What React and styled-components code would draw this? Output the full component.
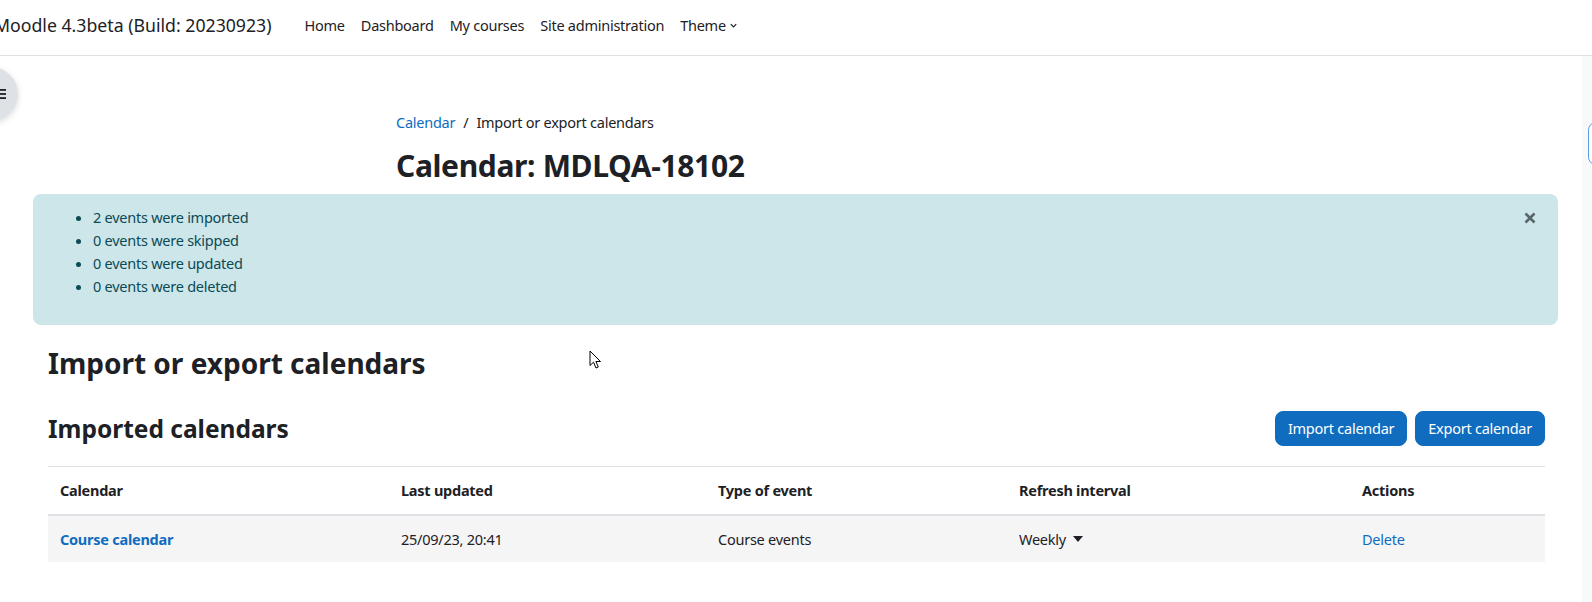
import React from "react";
import styled, { createGlobalStyle } from "styled-components";

const GlobalStyle = createGlobalStyle`
  html, body {
    margin: 0;
    padding: 0;
    background: #fff;
    overflow: hidden;
  }
  body {
    font-family: "Noto Sans", "Open Sans", sans-serif;
    font-size: 14.5px;
    letter-spacing: -0.25px;
    line-height: 23px;
    color: #1d2125;
  }
  * { box-sizing: border-box; }
`;

const Page = styled.div`
  position: relative;
  width: 1592px;
  height: 602px;
  overflow: hidden;
`;

const Navbar = styled.nav`
  height: 56px;
  display: flex;
  align-items: center;
  border-bottom: 1px solid #dee2e6;
  padding-bottom: 4px;
`;

const Brand = styled.a`
  font-size: 17.7px;
  letter-spacing: 0;
  color: #1d2125;
  margin-left: -6px;
  margin-right: 25px;
  white-space: nowrap;
`;

const NavList = styled.ul`
  display: flex;
  list-style: none;
  margin: 0;
  padding: 0;
`;

const NavItem = styled.li`
  padding: 0 8px;
  display: flex;
  align-items: center;
  gap: 3px;
  white-space: nowrap;
`;

const Body = styled.div`
  display: flex;
  height: 546px;
`;

const Main = styled.main`
  flex: 1;
  position: relative;
  padding: 55px 24px 0 33px;
`;

const DrawerToggle = styled.button`
  position: absolute;
  left: -36px;
  top: 11px;
  width: 54px;
  height: 54px;
  border-radius: 50%;
  border: none;
  background: #dee2e6;
  box-shadow: 0 2px 6px rgba(0, 0, 0, 0.15);
  display: flex;
  align-items: center;
  justify-content: flex-end;
  padding: 0 12px 0 0;
`;

const Header = styled.header`
  width: 799px;
  margin: 0 auto 10px;
`;

const Breadcrumb = styled.ol`
  list-style: none;
  margin: 0 0 14px;
  padding: 0;
  display: flex;
  gap: 8px;
`;

const Crumb = styled.li`
  color: ${(p) => (p.$link ? "#0f6cbf" : "#1d2125")};
`;

const PageTitle = styled.h1`
  margin: 0;
  font-size: 30px;
  letter-spacing: -0.35px;
  line-height: 36px;
  font-weight: 700;
`;

const Alert = styled.div`
  position: relative;
  background: #cce6ea;
  color: #0c4a54;
  border-radius: 8px;
  padding: 12px 64px 12px 20px;
  height: 131px;
`;

const AlertList = styled.ul`
  margin: 0;
  padding-left: 40px;
`;

const Close = styled.button`
  position: absolute;
  top: 18px;
  right: 22px;
  border: none;
  background: transparent;
  padding: 0;
  width: 12px;
  height: 12px;
  display: flex;
`;

const Region = styled.section`
  padding: 0 13px 0 15px;
`;

const H2 = styled.h2`
  margin: 20px 0 30px;
  font-size: 28px;
  letter-spacing: 0;
  line-height: 36px;
  font-weight: 700;
`;

const HeadingRow = styled.div`
  display: flex;
  align-items: center;
  justify-content: space-between;
  margin-bottom: 20px;
`;

const H3 = styled.h3`
  margin: 0;
  font-size: 24.5px;
  letter-spacing: 0;
  line-height: 30px;
  font-weight: 700;
`;

const Buttons = styled.div`
  display: flex;
  gap: 8px;
`;

const Button = styled.button`
  font: inherit;
  letter-spacing: inherit;
  color: #fff;
  background: #0f6cbf;
  border: 1px solid #0f6cbf;
  border-radius: 8px;
  padding: 5px 12px;
  line-height: 23px;
`;

const Table = styled.table`
  width: 100%;
  border-collapse: collapse;
  table-layout: fixed;
`;

const Th = styled.th`
  width: ${(p) => p.$w}px;
  text-align: left;
  font-weight: 700;
  padding: 12px;
  border-top: 1px solid #dee2e6;
  border-bottom: 2px solid #dee2e6;
`;

const Row = styled.tr`
  background: #f5f5f5;
`;

const Td = styled.td`
  padding: 11.5px 12px;
  color: ${(p) => (p.$link ? "#0f6cbf" : "#1d2125")};
  font-weight: ${(p) => (p.$bold ? 700 : 400)};
`;

const Select = styled.span`
  display: inline-flex;
  align-items: center;
  gap: 7px;
`;

const RightDrawer = styled.aside`
  width: 10px;
  background: #f8f9fa;
  position: relative;
`;

const RightToggle = styled.div`
  position: absolute;
  left: 6px;
  top: 66px;
  width: 40px;
  height: 43px;
  border: 1px solid #5b9be0;
  border-radius: 8px;
  background: #fff;
`;

const Cursor = styled.svg`
  position: absolute;
  left: 589px;
  top: 350px;
`;

const events = [
  "2 events were imported",
  "0 events were skipped",
  "0 events were updated",
  "0 events were deleted",
];

const App = () => {
  return (
    <Page>
      <GlobalStyle />
      <Navbar>
        <Brand>Moodle 4.3beta (Build: 20230923)</Brand>
        <NavList>
          <NavItem>Home</NavItem>
          <NavItem>Dashboard</NavItem>
          <NavItem>My courses</NavItem>
          <NavItem>Site administration</NavItem>
          <NavItem>
            Theme
            <svg width="9" height="9" viewBox="0 0 10 10">
              <path d="M2 3.5 L5 6.5 L8 3.5" fill="none" stroke="#1d2125" strokeWidth="1.4" />
            </svg>
          </NavItem>
        </NavList>
      </Navbar>
      <Body>
        <Main>
          <DrawerToggle aria-label="Open course index">
            <svg width="6" height="10" viewBox="0 0 6 10">
              <rect x="0" y="0" width="6" height="1.8" fill="#1d2125" />
              <rect x="0" y="4.1" width="6" height="1.8" fill="#1d2125" />
              <rect x="0" y="8.2" width="6" height="1.8" fill="#1d2125" />
            </svg>
          </DrawerToggle>
          <Header>
            <Breadcrumb>
              <Crumb $link>Calendar</Crumb>
              <Crumb>/</Crumb>
              <Crumb>Import or export calendars</Crumb>
            </Breadcrumb>
            <PageTitle>Calendar: MDLQA-18102</PageTitle>
          </Header>
          <Alert>
            <AlertList>
              {events.map((e) => (
                <li key={e}>{e}</li>
              ))}
            </AlertList>
            <Close aria-label="Dismiss">
              <svg width="12" height="12" viewBox="0 0 12 12">
                <path d="M1.5 1.5 L10.5 10.5 M10.5 1.5 L1.5 10.5" stroke="#5b6669" strokeWidth="2.6" />
              </svg>
            </Close>
          </Alert>
          <Region>
            <H2>Import or export calendars</H2>
            <HeadingRow>
              <H3>Imported calendars</H3>
              <Buttons>
                <Button>Import calendar</Button>
                <Button>Export calendar</Button>
              </Buttons>
            </HeadingRow>
            <Table>
              <thead>
                <tr>
                  <Th $w={341}>Calendar</Th>
                  <Th $w={317}>Last updated</Th>
                  <Th $w={301}>Type of event</Th>
                  <Th $w={343}>Refresh interval</Th>
                  <Th $w={195}>Actions</Th>
                </tr>
              </thead>
              <tbody>
                <Row>
                  <Td $link $bold>Course calendar</Td>
                  <Td>25/09/23, 20:41</Td>
                  <Td>Course events</Td>
                  <Td>
                    <Select>
                      Weekly
                      <svg width="10" height="6" viewBox="0 0 10 6">
                        <path d="M0 0 H10 L5 6 Z" fill="#1d2125" />
                      </svg>
                    </Select>
                  </Td>
                  <Td $link>Delete</Td>
                </Row>
              </tbody>
            </Table>
          </Region>
        </Main>
        <RightDrawer>
          <RightToggle />
        </RightDrawer>
      </Body>
      <Cursor width="13" height="20" viewBox="0 0 13 20">
        <path d="M1 1 L1 15.5 L4.5 12.2 L7 18 L9.3 17 L6.9 11.5 L11.5 11.5 Z" fill="#fff" stroke="#000" strokeWidth="1" />
      </Cursor>
    </Page>
  );
};

export default App;
